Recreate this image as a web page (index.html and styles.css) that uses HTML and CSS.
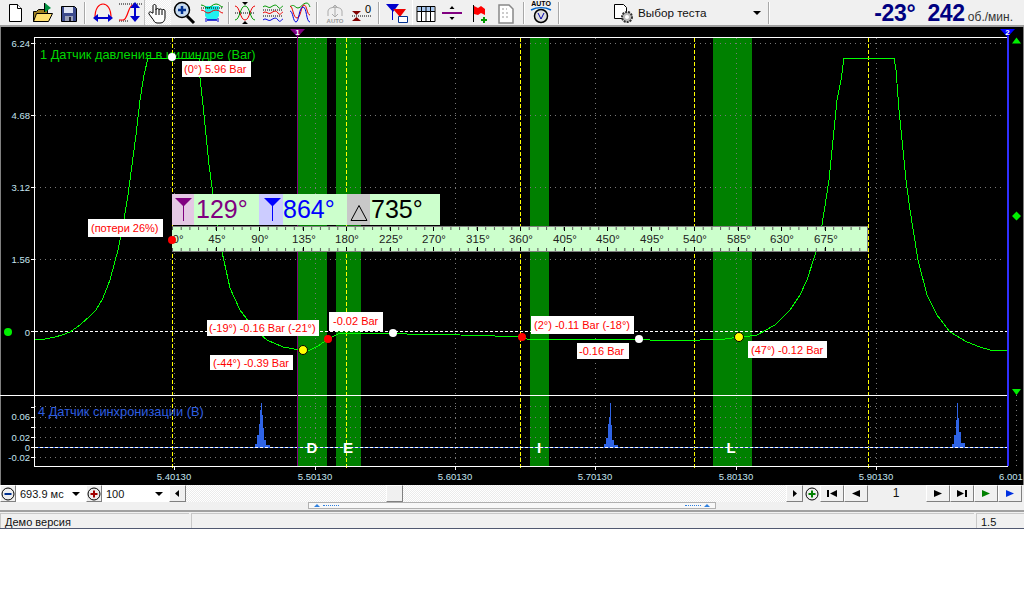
FILE: index.html
```html
<!DOCTYPE html>
<html lang="ru">
<head>
<meta charset="utf-8">
<title>Датчик давления</title>
<link rel="stylesheet" href="styles.css">
</head>
<body>
<div class="page">
  <header class="toolbar">
    <span class="pad1"></span>
    <span class="btn w27"><svg width="24" height="24" viewBox="0 0 24 24"><path class="o" d="M6.500 3.500h8l4 4v13h-12z"/><path class="o" d="M14.500 3.500v4h4"/></svg></span>
    <span class="btn w27"><svg width="24" height="24" viewBox="0 0 24 24"><path fill="#a08020" stroke="#000" d="M3.500 10.500h3l2-2h9v12h-14z"/><path fill="#ffe070" stroke="#000" d="M3.500 20.500l3-8h16l-4 8z"/><path fill="#009040" d="M15 2l6 5-6 4z"/><path stroke="#000" d="M14.500 2v9"/></svg></span>
    <span class="btn w27"><svg width="24" height="24" viewBox="0 0 24 24"><path fill="#3c4a8c" stroke="#000" d="M4.500 5.500h13l2 2v13h-15z"/><path fill="#dfe4f4" d="M7 6h9v6H7z"/><path fill="#9aa0b8" d="M8 15h8v5H8z"/><path fill="#223" d="M12 16h2v4h-2z"/></svg></span>
    <span class="pad2"></span><span class="sep"></span>
    <span class="btn w34"><svg width="24" height="24" viewBox="0 0 24 24"><path fill="none" stroke="#f00" stroke-width="1.200" d="M4 17C4 7 8 3 12 3s8 4 8 14"/><path fill="none" stroke="#00c" stroke-width="2" d="M5 17h14"/><path fill="#00c" d="M7 13v8l-5-4zM17 13v8l5-4z"/></svg></span>
    <span class="btn w24"><svg width="28" height="24" viewBox="0 0 28 24"><path fill="none" stroke="#000" stroke-dasharray="1 1" d="M1 3h24M1 20h10"/><path fill="none" stroke="#f00" stroke-width="1.200" d="M1 19h4c5 0 5-15 10-15"/><path fill="none" stroke="#00c" stroke-width="2" d="M17 5v12"/><path fill="#00c" d="M12 7h10l-5-6zM12 15h10l-5 6z"/></svg></span>
    <span class="sep thin"></span>
    <span class="btn w26 down"><svg width="24" height="24" viewBox="0 0 24 24"><path fill="#fff" stroke="#000" d="M7 12V5c0-2 3-2 3 0v4c0-2 3-2 3 0 0-1.500 3-1.500 3 .5 0-1.500 3-1.500 3 .5v6c0 4-2 6-5 6h-3c-3 0-3-3-5-5l-3-4c-1-2 2-3 3-1z"/><path stroke="#000" d="M10 9v5M13 9v5M16 10v4"/></svg></span>
    <span class="btn w26"><svg width="24" height="24" viewBox="0 0 24 24"><path stroke="#000" stroke-width="3" d="M15 15l7 7"/><circle cx="10" cy="9" r="7.500" fill="#c8dcf0" stroke="#000" stroke-width="1.500"/><path stroke="#003090" stroke-width="2.500" d="M6 9h8M10 5v8"/></svg></span>
    <span class="btn w30"><svg width="26" height="24" viewBox="0 0 26 24"><path fill="#20f0f0" d="M6 5h14v10l-3 4H9l-3-4z"/><path fill="none" stroke="#090" d="M2 4c4 0 4 3 7 3s4-4 8-4 4 3 7 3"/><path fill="none" stroke="#e00" d="M2 9c4 0 4 3 7 3s4-3 8-3 4 3 7 3"/><path stroke="#000" stroke-dasharray="1 1" d="M2 7h22"/><path stroke="#00c" stroke-width="1.500" d="M8 19h10"/><path stroke="#00c" d="M7 17v4M19 17v4"/></svg></span>
    <span class="pad1"></span><span class="sep"></span>
    <span class="btn w30"><svg width="24" height="24" viewBox="0 0 24 24"><path fill="none" stroke="#e00" d="M2 5c5 0 5 14 10 14s5-14 10-14"/><path fill="none" stroke="#090" d="M2 19c5 0 5-14 10-14s5 14 10 14"/><path stroke="#000" stroke-dasharray="1 1" d="M2 12h20"/><path fill="#000" d="M9 1h6l-3 3zM9 23h6l-3-3z"/></svg></span>
    <span class="btn w26"><svg width="24" height="24" viewBox="0 0 24 24"><path fill="none" stroke="#090" d="M2 6c3-3 5 2 8 0s5-3 7 0 3 0 5-1"/><path fill="none" stroke="#e00" d="M2 12c3-3 5 2 8 0s5-3 7 0 3 0 5-1"/><path fill="none" stroke="#00d" d="M2 19c3-3 5 2 8 0s5-3 7 0 3 0 5-1"/><path stroke="#000" stroke-dasharray="1 1" d="M2 9h20M2 15h20"/></svg></span>
    <span class="btn w28"><svg width="24" height="24" viewBox="0 0 24 24"><path fill="none" stroke="#090" d="M2 6c4-4 5 1 8 1s5-5 8-5 3 2 4 4"/><path fill="none" stroke="#e00" d="M2 5c3 0 3 12 7 12s4-13 7-13 3 10 6 10"/><path fill="none" stroke="#00d" d="M2 10c3 0 3 11 6 11s3-15 7-15 3 15 7 15"/></svg></span>
    <span class="pad2"></span><span class="sep"></span>
    <span class="btn w34"><svg width="24" height="24" viewBox="0 0 24 24"><path fill="none" stroke="#aaa" d="M5 15v-5c0-5 14-5 14 0v5M12 4v12M9 7l3-3 3 3M9 13l3 3 3-3"/><text x="12" y="22" class="ico-auto">AUTO</text></svg></span>
    <span class="btn w20"><svg width="24" height="24" viewBox="0 0 24 24"><path fill="#800000" d="M2 10h9l-4.500 4zM2 20h9l-4.500-4z"/><path stroke="#000" stroke-dasharray="1 1" d="M2 15h20"/><text x="18" y="12" class="ico-zero">0</text></svg></span>
    <span class="pad6"></span><span class="sep"></span>
    <span class="pad4"></span>
    <span class="btn w28"><svg width="26" height="24" viewBox="0 0 26 24"><path fill="#00c" d="M1 3h13l-6 8z"/><path stroke="#00c" d="M7.500 10v9"/><path fill="#e00" d="M8 8h13l-6 8z"/><path stroke="#e00" d="M14.500 14v6"/><path fill="#fff" stroke="#003090" d="M13.500 15.500h9v6h-9z"/></svg></span>
    <span class="sep light"></span>
    <span class="btn w26"><svg width="22" height="24" viewBox="0 0 22 24"><path fill="#fff" stroke="#000" d="M2 5.500h18v15H2z"/><path fill="#a8c8f0" d="M3 6h16v4H3z"/><path stroke="#000" d="M2 10.500h18M6.500 6v15M11 6v15M15.500 6v15"/></svg></span>
    <span class="btn w26"><svg width="24" height="24" viewBox="0 0 24 24"><path stroke="#800080" stroke-width="2" d="M2 12h20"/><path fill="#000" d="M9.500 8h5L12 5zM9.500 16h5L12 19z"/></svg></span>
    <span class="btn w27"><svg width="24" height="24" viewBox="0 0 24 24"><path stroke="#000" d="M6.500 4v17"/><path fill="#f00" d="M7 5l4 2 3-2 4 3v6l-4-2-3 2-4-1z"/><path stroke="#090" stroke-width="2" d="M14 19h6M17 16v6"/></svg></span>
    <span class="btn w28"><svg width="24" height="24" viewBox="0 0 24 24"><path fill="#fff" stroke="#888" stroke-width="1.500" d="M5 4h10l4 4v14H5z"/><path stroke="#999" stroke-dasharray="2 2" d="M8 8h5M8 12h8M8 16h8"/></svg></span>
    <span class="pad3"></span><span class="sep"></span>
    <span class="btn w32"><svg width="24" height="25" viewBox="0 0 24 25"><text x="12" y="6" class="ico-auto2">AUTO</text><path fill="none" stroke="#06c" stroke-width="1.500" d="M2 10c6-3 14-3 20 0"/><circle cx="12" cy="16" r="6.500" fill="#ddd" stroke="#000" stroke-width="1.500"/><path fill="none" stroke="#00a" d="M9 13l3 6 3-6"/></svg></span>
    <span class="pad1"></span><span class="sep"></span>
    <div class="selector">
      <svg width="22" height="22" viewBox="0 0 22 22"><path fill="#fff" stroke="#000" d="M1.500 2.500h9l3 3v11h-12z"/><circle cx="14" cy="15" r="5" fill="#bbb" stroke="#333" stroke-dasharray="2 1" stroke-width="2"/><circle cx="14" cy="15" r="2" fill="#fff"/></svg>
      <span class="sel-text">Выбор теста</span>
      <span class="caret"></span>
    </div>
    <span class="sep"></span>
    <div class="readout"><b class="big b1">-23°</b><b class="big">242</b><span class="unit">об./мин.</span></div>
  </header>

  <main class="chart">
    <svg width="1024" height="458" viewBox="0 27 1024 458">
      <defs>
        <pattern id="ticks" width="8.7" height="26" patternUnits="userSpaceOnUse" x="172" y="226">
          <path stroke="#555" d="M.5 1v3M.5 22v3"/>
        </pattern>
      </defs>
      <path class="edge" d="M.5 27V485M1023.500 27V485"/>
      <!-- phase bands -->
      <g class="band">
        <rect x="298" y="38" width="29" height="428"/>
        <rect x="336" y="38" width="25" height="428"/>
        <rect x="530" y="38" width="19" height="428"/>
        <rect x="713" y="38" width="39" height="428"/>
      </g>
      <!-- grid -->
      <g class="grid">
        <path d="M35 43.500H1005M35 115.500H1005M35 187.500H1005M35 259.500H1005"/>
        <path d="M35 406.500H1005M35 417.500H1005M35 427.500H1005M35 437.500H1005M35 457.500H1005"/>
        <path d="M174.500 38V470M315.500 38V470M455.500 38V470M595.500 38V470M736.500 38V470M876.500 38V470M1016.500 395V470"/>
      </g>
      <g class="cursor">
        <path d="M172.500 38V470M346.500 38V470M520.500 38V470M694.500 38V470M868.500 38V470"/>
      </g>
      <path class="spike-low" d="M35 447.500H1007"/>
      <path class="zero" d="M35 331.500H1007M35 447.500H1007"/>
      <!-- frame -->
      <path class="frame" d="M34.500 466.500V37.500H1008M34.500 466.500H1008M0 395.500H1008"/>
      <path class="frame" d="M31 43.500h3M31 115.500h3M31 187.500h3M31 259.500h3M31 331.500h3M31 407.500h3M31 417.500h3M31 427.500h3M31 437.500h3M31 447.500h3M31 457.500h3"/>
      <path class="frame" d="M174.500 466v4M315.500 466v4M455.500 466v4M595.500 466v4M736.500 466v4M876.500 466v4"/>
      <path class="line-purple" d="M297.500 36V466"/>
      <path class="line-blue" d="M1008 36V466"/>
      <!-- curves -->
      <polyline class="trace" points="35,339 45,339 55,337 62,335 70,332 80,325 90,316 96,310 103,298 110,280 118,250 123,225 128,195 132,165 136,135 140,100 144,75 148,58 199,58 200,78 203,105 206,135 209,165 212,187 217,220 222,252 230,288 240,310 255,330 267,340 283,347 300,350 310,350 318,346 328,339 338,334 350,333 393,333 407,334 430,334 460,335 495,336 522,337 527,339 639,339 650,340 700,340 725,339 739,337 750,336 757,335 775,325 790,310 800,295 807,280 815,255 822,225 829,180 833,140 837,100 841,80 844,58 894,58 896,70 899,110 903,150 906,180 910,210 918,260 927,295 937,315 950,332 967,342 980,347 990,350 1007,350"/>
      <path class="spike" d="M255 447V444H257V435H259V424H260V410H261V403H262V415H263V428H264V440H266V445H270V447z"/>
      <path class="spike" d="M604 447V444H606V438H608V424H609V417H610V403H611V425H612V440H614V445H618V447z"/>
      <path class="spike" d="M952 447V444H954V435H956V420H957V403H958V418H959V432H961V443H965V447z"/>
      <!-- channel captions and axis -->
      <text x="40" y="59" class="cap green">1 Датчик давления в цилиндре (Bar)</text>
      <text x="38" y="416" class="cap blue">4 Датчик синхронизации (В)</text>
      <g class="axis end">
        <text x="30" y="47">6.24</text>
        <text x="30" y="119">4.68</text>
        <text x="30" y="191">3.12</text>
        <text x="30" y="263">1.56</text>
        <text x="30" y="336">0</text>
        <text x="30" y="420">0.06</text>
        <text x="30" y="441">0.02</text>
        <text x="30" y="451">0</text>
        <text x="30" y="461">-0.02</text>
      </g>
      <g class="axis mid">
        <text x="174" y="480">5.40130</text>
        <text x="315" y="480">5.50130</text>
        <text x="455" y="480">5.60130</text>
        <text x="595" y="480">5.70130</text>
        <text x="736" y="480">5.80130</text>
        <text x="876" y="480">5.90130</text>
        <text x="1011" y="480">6.001</text>
      </g>
      <!-- band letters -->
      <g class="letters">
        <text x="312" y="453">D</text>
        <text x="348" y="453">E</text>
        <text x="539" y="453">I</text>
        <text x="731" y="453">L</text>
      </g>
      <!-- cursor readout -->
      <rect class="panel" x="172" y="194" width="268" height="31"/>
      <rect class="pale-purple" x="172" y="194" width="22" height="31"/>
      <rect class="pale-blue" x="259" y="194" width="24" height="31"/>
      <rect class="pale-gray" x="347" y="194" width="23" height="31"/>
      <path class="m-purple" d="M175 198h17l-8 8v15h-1v-15z"/>
      <path class="m-blue" d="M264 198h17l-8 8v15h-1v-15z"/>
      <path class="m-tri" d="M351 220.500l8-15 8 15z"/>
      <text x="196" y="218" class="read purple">129°</text>
      <text x="283" y="218" class="read bluet">864°</text>
      <text x="371" y="218" class="read black">735°</text>
      <!-- ruler -->
      <rect class="panel" x="172" y="226" width="696" height="26"/>
      <rect x="172" y="226" width="696" height="26" fill="url(#ticks)"/>
      <path class="ruler-edge" d="M172 226.500H867.500V251.500H172"/>
      <path class="ruler-major" d="M216.500 227v4M216.500 247v4M259.500 227v4M259.500 247v4M303.500 227v4M303.500 247v4M346.500 227v4M346.500 247v4M390.500 227v4M390.500 247v4M433.500 227v4M433.500 247v4M477.500 227v4M477.500 247v4M520.500 227v4M520.500 247v4M564.500 227v4M564.500 247v4M607.500 227v4M607.500 247v4M651.500 227v4M651.500 247v4M694.500 227v4M694.500 247v4M738.500 227v4M738.500 247v4M781.500 227v4M781.500 247v4M825.500 227v4M825.500 247v4"/>
      <g class="ruler-text">
        <text x="178" y="243">0°</text><text x="217" y="243">45°</text><text x="260" y="243">90°</text>
        <text x="304" y="243">135°</text><text x="347" y="243">180°</text><text x="391" y="243">225°</text>
        <text x="434" y="243">270°</text><text x="478" y="243">315°</text><text x="521" y="243">360°</text>
        <text x="565" y="243">405°</text><text x="608" y="243">450°</text><text x="652" y="243">495°</text>
        <text x="695" y="243">540°</text><text x="739" y="243">585°</text><text x="782" y="243">630°</text>
        <text x="826" y="243">675°</text>
      </g>
      <!-- value labels -->
      <g class="tag">
        <rect x="182" y="61" width="69" height="16"/><text x="184" y="73">(0°) 5.96 Bar</text>
        <rect x="88" y="219" width="75" height="18"/><text x="91" y="232">(потери 26%)</text>
        <rect x="207" y="320" width="112" height="16"/><text x="209" y="332">(-19°) -0.16 Bar (-21°)</text>
        <rect x="329" y="312" width="54" height="19"/><text x="333" y="325">-0.02 Bar</text>
        <rect x="210" y="355" width="83" height="15"/><text x="213" y="367">(-44°) -0.39 Bar</text>
        <rect x="531" y="316" width="103" height="18"/><text x="534" y="329">(2°) -0.11 Bar (-18°)</text>
        <rect x="577" y="343" width="52" height="16"/><text x="579" y="355">-0.16 Bar</text>
        <rect x="748" y="341" width="79" height="17"/><text x="751" y="354">(47°) -0.12 Bar</text>
      </g>
      <!-- points -->
      <g class="pt-white"><circle cx="172" cy="57" r="4"/><circle cx="393" cy="333" r="4"/><circle cx="639" cy="339" r="4"/></g>
      <g class="pt-red"><circle cx="172" cy="240" r="4"/><circle cx="328" cy="339" r="4"/><circle cx="522" cy="337" r="4"/></g>
      <g class="pt-yellow"><circle cx="303" cy="350" r="4.500"/><circle cx="739" cy="337" r="4.500"/></g>
      <!-- side markers -->
      <circle class="side" cx="8" cy="332" r="4"/>
      <path class="side" d="M1012 43.500l4.500-6 4.500 6zM1016.500 211.500l4.500 4.500-4.500 4.500-4.500-4.500zM1012 389h9l-4.500 6z"/>
      <path class="m-purple" d="M290 29h15l-7.500 8z"/>
      <path class="m-bluehead" d="M1000 29h15l-7.500 8z"/>
      <text x="297.500" y="35" class="flag">1</text>
      <text x="1007.500" y="35" class="flag">2</text>
    </svg>
  </main>

  <div class="controls">
    <span class="cbtn w16"><svg width="14" height="14" viewBox="0 0 14 14"><circle cx="7" cy="7" r="6" fill="#eee" stroke="#000"/><path stroke="#003090" stroke-width="2" d="M3.500 7h7"/></svg></span>
    <span class="combo w70">693.9 мс<span class="caret"></span></span>
    <span class="cbtn w16"><svg width="14" height="14" viewBox="0 0 14 14"><circle cx="7" cy="7" r="6" fill="#eee" stroke="#000"/><path stroke="#a00000" stroke-width="2" d="M3.500 7h7M7 3.500v7"/></svg></span>
    <span class="combo w67">100<span class="caret"></span></span>
    <span class="cbtn w17"><svg width="9" height="9" viewBox="0 0 9 9"><path d="M6 1v7L2 4.500z"/></svg></span>
    <div class="track"><span class="thumb"></span></div>
    <span class="cbtn w17"><svg width="9" height="9" viewBox="0 0 9 9"><path d="M3 1v7l4-3.500z"/></svg></span>
    <span class="cbtn w17 flat"><svg width="14" height="14" viewBox="0 0 14 14"><circle cx="7" cy="7" r="6" fill="#eee" stroke="#000"/><path stroke="#008000" stroke-width="2" d="M3.500 7h7M7 3.500v7"/></svg></span>
    <span class="cbtn w24"><svg width="12" height="9" viewBox="0 0 12 9"><path d="M1 1h2v7H1zM11 1v7L4 4.500z"/></svg></span>
    <span class="cbtn w24"><svg width="10" height="9" viewBox="0 0 10 9"><path d="M9 1v7L1 4.500z"/></svg></span>
    <span class="page-no">1</span>
    <span class="cbtn w24"><svg width="10" height="9" viewBox="0 0 10 9"><path d="M1 1v7l8-3.500z"/></svg></span>
    <span class="cbtn w24"><svg width="12" height="9" viewBox="0 0 12 9"><path d="M1 1v7l7-3.500zM9 1h2v7H9z"/></svg></span>
    <span class="cbtn w24"><svg width="10" height="9" viewBox="0 0 10 9"><path fill="#008000" d="M1 1v7l8-3.500z"/></svg></span>
    <span class="cbtn w24"><svg width="10" height="9" viewBox="0 0 10 9"><path fill="#0030e0" d="M1 1v7l8-3.500z"/></svg></span>
  </div>

  <div class="mini">
    <div class="mini-bar">
      <span class="mini-up"></span><span class="mini-dots"></span><span class="mini-space"></span><span class="mini-dots"></span><span class="mini-up"></span>
    </div>
  </div>

  <footer class="status">
    <span class="cell c1">Демо версия</span>
    <span class="cell c2"></span>
    <span class="cell c3">1.5</span>
  </footer>
</div>
</body>
</html>
```

FILE: styles.css
```css
* { box-sizing: border-box; }
html, body { margin: 0; background: #fff; }
body { font-family: "Liberation Sans", Arial, sans-serif; }
.page { width: 1024px; height: 529px; display: flex; flex-direction: column; overflow: hidden; background: #f0f0f0; }

/* toolbar */
.toolbar { height: 27px; flex: none; display: flex; align-items: center; border-bottom: 2px solid #a0a0a0; background: #f0f0f0; }
.btn { display: flex; align-items: center; justify-content: center; height: 25px; flex: none; overflow: visible; }
.btn svg { flex: none; }
.btn.down { background: repeating-conic-gradient(#fff 0 25%, #eee 0 50%) 0 0 / 2px 2px; }
.o { fill: #fff; stroke: #000; }
.w20 { width: 20px; } .w24 { width: 24px; } .w26 { width: 26px; } .w27 { width: 27px; } .w28 { width: 28px; }
.w30 { width: 30px; } .w32 { width: 32px; } .w34 { width: 34px; }
.pad1 { width: 1px; flex: none; } .pad2 { width: 2px; flex: none; } .pad3 { width: 3px; flex: none; }
.pad4 { width: 4px; flex: none; } .pad6 { width: 6px; flex: none; }
.sep { width: 2px; height: 22px; flex: none; background: #a8a8a8; border-right: 1px solid #fff; }
.sep.thin { width: 1px; height: 25px; border: 0; background: #c0c0c0; }
.sep.light { width: 1px; height: 25px; background: #fff; border: 0; }
.selector { width: 208px; flex: none; display: flex; align-items: center; padding: 0 7px 0 53px; height: 25px; }
.sel-text { font-size: 11.700px; margin-left: 3px; color: #111; white-space: nowrap; }
.caret { display: inline-block; width: 0; height: 0; border: 4px solid transparent; border-top-color: #000; border-bottom-width: 0; }
.selector .caret { margin-left: auto; }
.readout { flex: 1; display: flex; align-items: baseline; justify-content: flex-end; color: #000080; padding: 1px 11px 0 0; height: 25px; line-height: 25px; }
.big { font-size: 23px; font-weight: 700; letter-spacing: -.3px; }
.b1 { margin-right: 12px; }
.unit { font-size: 12px; margin-left: 3px; color: #333; }

/* chart */
.chart { height: 458px; flex: none; background: #000; }
.chart svg { display: block; }
.edge { stroke: #808080; fill: none; shape-rendering: crispEdges; }
.band rect { fill: #008000; }
.grid path { stroke: #777; fill: none; stroke-dasharray: 1 4; shape-rendering: crispEdges; }
.cursor path { stroke: #ffff00; fill: none; stroke-dasharray: 4 2; shape-rendering: crispEdges; }
.zero { stroke: #fff; fill: none; stroke-dasharray: 3 2; shape-rendering: crispEdges; }
.frame { stroke: #fff; fill: none; shape-rendering: crispEdges; }
.line-purple { stroke: #800080; shape-rendering: crispEdges; }
.line-blue { stroke: #3030ff; stroke-width: 2; shape-rendering: crispEdges; }
.trace { fill: none; stroke: #00ff00; shape-rendering: crispEdges; }
.spike { fill: #2f64e6; }
.spike-low { stroke: #2f64e6; fill: none; shape-rendering: crispEdges; }
.cap { font-size: 12.800px; }
.green { fill: #00d800; }
.blue { fill: #2f5fe0; }
.axis text { font-size: 9.500px; fill: #c4e4f0; }
.axis.end text { text-anchor: end; }
.axis.mid text { text-anchor: middle; }
.letters text { font-size: 15px; font-weight: 700; fill: #fff; text-anchor: middle; }
.panel { fill: #ccffcc; }
.pale-purple { fill: #e4c8e4; }
.pale-blue { fill: #ccccff; }
.pale-gray { fill: #c8c8c8; }
.m-purple { fill: #800080; }
.m-blue { fill: #0000ff; }
.m-bluehead { fill: #0000ff; }
.m-tri { fill: none; stroke: #000; }
.read { font-size: 25px; }
.purple { fill: #800080; }
.bluet { fill: #0000ff; }
.black { fill: #000; }
.ruler-edge { fill: none; stroke: #808080; stroke-width: 1.5; shape-rendering: crispEdges; }
.ruler-major { stroke: #000; shape-rendering: crispEdges; }
.ruler-text text { font-size: 11.500px; fill: #222; text-anchor: middle; }
.tag rect { fill: #fff; }
.tag text { font-size: 11px; fill: #f00; }
.pt-white circle { fill: #fff; }
.pt-red circle { fill: #f00; }
.pt-yellow circle { fill: #ffff00; stroke: #000; }
.side { fill: #00f000; }
.flag { font-size: 8px; font-weight: 700; fill: #fff; text-anchor: middle; }
.ico-auto { font-size: 6px; fill: #999; text-anchor: middle; font-weight: 700; }
.ico-auto2 { font-size: 7px; fill: #000; text-anchor: middle; font-weight: 700; }
.ico-zero { font-size: 11px; fill: #000; text-anchor: middle; }

/* controls */
.controls { height: 17px; flex: none; display: flex; align-items: stretch; font-size: 11px; color: #111; padding-right: 2px; }
.cbtn { display: flex; align-items: center; justify-content: center; flex: none; background: #f0f0f0; border-right: 1px solid #808080; border-bottom: 1px solid #808080; border-top: 1px solid #fff; border-left: 1px solid #fff; }
.cbtn.flat { border-color: transparent; }
.w16 { width: 16px; } .w17 { width: 17px; }
.combo { background: #fff; display: flex; align-items: center; justify-content: space-between; padding: 0 6px 0 4px; flex: none; }
.w70 { width: 70px; } .w67 { width: 67px; }
.track { flex: 1; display: flex; padding-left: 200px; background: repeating-conic-gradient(#fff 0 25%, #ebebeb 0 50%) 0 0 / 2px 2px; }
.thumb { width: 17px; background: #f0f0f0; border-right: 1px solid #808080; border-bottom: 1px solid #808080; border-top: 1px solid #fff; border-left: 1px solid #fff; }
.page-no { width: 58px; flex: none; background: #f0f0f0; text-align: center; line-height: 17px; font-size: 12px; padding-right: 2px; }

/* mini scrollbar */
.mini { height: 8px; flex: none; padding-left: 308px; }
.mini-bar { width: 408px; height: 7px; display: flex; align-items: center; padding: 0 5px; gap: 3px; background: #f8f8f8; border: 1px solid #b0b0b0; }
.mini-up { width: 0; height: 0; border: 3px solid transparent; border-bottom-color: #2f80e0; border-top-width: 0; }
.mini-dots { width: 16px; flex: none; border-top: 1px dotted #2f80e0; }
.mini-space { flex: 1; }

/* status */
.status { height: 19px; flex: none; display: flex; gap: 2px; border-top: 2px solid #a0a0a0; border-bottom: 1px solid #505870; font-size: 11px; color: #111; padding-top: 1px; }
.cell { line-height: 16px; border-left: 1px solid #c8c8c8; border-top: 1px solid #c8c8c8; padding-left: 4px; flex: none; overflow: hidden; }
.c1 { width: 189px; }
.c2 { width: 783px; }
.c3 { flex: 1; }
```
